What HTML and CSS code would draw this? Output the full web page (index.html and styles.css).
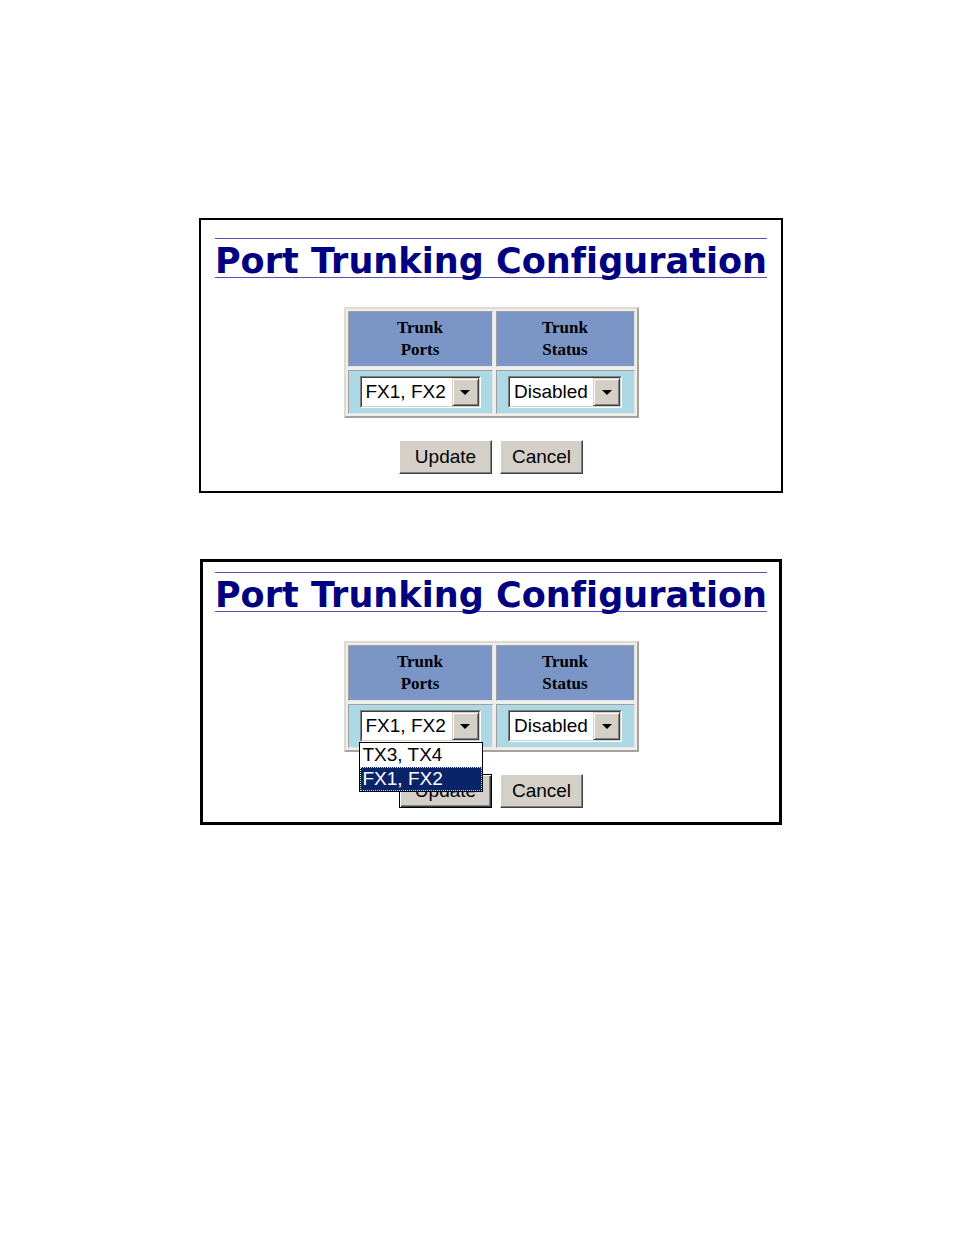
FILE: index.html
```html
<!DOCTYPE html>
<html lang="en">
<head>
<meta charset="utf-8">
<title>Port Trunking Configuration</title>
<link rel="stylesheet" href="styles.css">
</head>
<body>
<div class="page">
  <section class="panel panel-a">
    <h1 class="title">Port Trunking Configuration</h1>
    <div class="grid">
      <div class="th">Trunk<br>Ports</div>
      <div class="th">Trunk<br>Status</div>
      <div class="td">
        <div class="select w-ports">
          <div class="field"><span class="value">FX1, FX2</span><span class="drop"><span class="arrow"></span></span></div>
        </div>
      </div>
      <div class="td">
        <div class="select w-status">
          <div class="field"><span class="value">Disabled</span><span class="drop"><span class="arrow"></span></span></div>
        </div>
      </div>
    </div>
    <div class="actions">
      <button class="btn w-update" type="button">Update</button>
      <button class="btn w-cancel" type="button">Cancel</button>
    </div>
  </section>

  <section class="panel panel-b">
    <h1 class="title">Port Trunking Configuration</h1>
    <div class="grid">
      <div class="th">Trunk<br>Ports</div>
      <div class="th">Trunk<br>Status</div>
      <div class="td">
        <div class="select w-ports">
          <div class="field"><span class="value">FX1, FX2</span><span class="drop"><span class="arrow"></span></span></div>
          <ul class="list">
            <li class="opt">TX3, TX4</li>
            <li class="opt sel">FX1, FX2</li>
          </ul>
        </div>
      </div>
      <div class="td">
        <div class="select w-status">
          <div class="field"><span class="value">Disabled</span><span class="drop"><span class="arrow"></span></span></div>
        </div>
      </div>
    </div>
    <div class="actions">
      <button class="btn w-update default" type="button">Update</button>
      <button class="btn w-cancel" type="button">Cancel</button>
    </div>
  </section>
</div>
</body>
</html>
```

FILE: styles.css
```css
html, body {
  margin: 0;
  padding: 0;
  background: #ffffff;
}

.page {
  padding-top: 218px;
  display: flex;
  flex-direction: column;
  align-items: flex-start;
}

.panel {
  box-sizing: border-box;
  border: 2px solid #000000;
  display: flex;
  flex-direction: column;
  align-items: center;
  background: #ffffff;
}

.panel-a {
  margin-left: 199px;
  width: 584px;
  height: 275px;
  padding: 18px 0 17px;
}

.panel-b {
  margin-left: 200px;
  margin-top: 66px;
  width: 582px;
  height: 266px;
  border-width: 3px;
  padding: 10px 0 14px;
}

.title {
  margin: 0;
  height: 38px;
  border-top: 1px solid #5353b3;
  border-bottom: 1px solid #5353b3;
  font-family: "DejaVu Sans", Verdana, sans-serif;
  font-weight: bold;
  font-size: 35px;
  letter-spacing: 0.05px;
  line-height: 44px;
  color: #000080;
  white-space: nowrap;
}

.grid {
  margin-top: 29px;
  display: grid;
  grid-template-columns: 145px 139px;
  grid-template-rows: 56px 44px;
  gap: 3px;
  padding: 2px;
  border: 2px solid;
  border-color: #dcdad4 #a4a29c #a4a29c #dcdad4;
  background: #efeeea;
}

.th,
.td {
  box-sizing: border-box;
  border: 1px solid;
  border-color: #a0a0a0 #e6e6e6 #e6e6e6 #a0a0a0;
  display: flex;
  align-items: center;
  justify-content: center;
}

.th {
  background: #7b96c6;
  font-family: "Liberation Serif", "Times New Roman", serif;
  font-weight: bold;
  font-size: 17px;
  line-height: 22px;
  color: #000000;
  text-align: center;
}

.td {
  background: #add8e6;
}

.select {
  position: relative;
  box-sizing: border-box;
  height: 32px;
  border: 1px solid;
  border-color: #808080 #ffffff #ffffff #808080;
  display: flex;
}

.w-ports { width: 121px; }
.w-status { width: 114px; }

.field {
  flex: 1;
  display: flex;
  border: 1px solid;
  border-color: #404040 #d4d0c8 #d4d0c8 #404040;
  background: #ffffff;
}

.value {
  flex: 1;
  padding-left: 4px;
  font-family: "Liberation Sans", Arial, sans-serif;
  font-size: 19px;
  line-height: 28px;
  color: #000000;
  white-space: nowrap;
  overflow: hidden;
}

.drop {
  box-sizing: border-box;
  width: 27px;
  background: #d4d0c8;
  border: 1px solid;
  border-color: #d4d0c8 #404040 #404040 #d4d0c8;
  box-shadow: inset 1px 1px #ffffff, inset -1px -1px #808080;
  display: flex;
  align-items: center;
  justify-content: center;
}

.arrow {
  width: 0;
  height: 0;
  border-left: 5px solid transparent;
  border-right: 5px solid transparent;
  border-top: 5px solid #000000;
  margin-top: 1px;
}

.list {
  position: absolute;
  left: -2px;
  top: calc(100% + 1px);
  width: 124px;
  box-sizing: border-box;
  margin: 0;
  padding: 0;
  list-style: none;
  border: 1px solid #000000;
  background: #ffffff;
  z-index: 5;
}

.opt {
  height: 24px;
  padding-left: 3px;
  font-family: "Liberation Sans", Arial, sans-serif;
  font-size: 19px;
  line-height: 24px;
  color: #000000;
  white-space: nowrap;
}

.opt.sel {
  background: #0a246a;
  color: #ffffff;
  outline: 1px dotted #e8e070;
  outline-offset: -1px;
}

.actions {
  margin-top: 22px;
  display: flex;
  gap: 8px;
}

.btn {
  -webkit-appearance: none;
  appearance: none;
  box-sizing: border-box;
  height: 34px;
  margin: 0;
  padding: 0;
  font-family: "Liberation Sans", Arial, sans-serif;
  font-size: 19px;
  color: #000000;
  background: #d4d0c8;
  border: 1px solid;
  border-color: #ffffff #404040 #404040 #ffffff;
  box-shadow: inset -1px -1px #808080;
}

.w-update { width: 93px; }
.w-cancel { width: 83px; }

.btn.default {
  border-color: #000000;
  box-shadow: inset 1px 1px #ffffff, inset -1px -1px #404040, inset -2px -2px #808080;
}
```
